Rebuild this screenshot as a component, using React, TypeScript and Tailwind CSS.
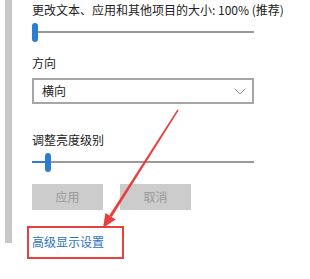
import React from 'react';

const FONT = { fontFamily: '"Microsoft YaHei", "Noto Sans CJK SC", "Noto Sans", sans-serif' };

function Slider({ value }: { value: number }) {
  return (
    <div className="relative h-[19px] w-[222px]">
      <div className="absolute left-0 right-0 top-[8px] h-[2px] bg-[#9a9a9a]" />
      <div className="absolute left-0 top-[8px] h-[2px] bg-[#2b7cd3]" style={{ width: value }} />
      <div className="absolute top-0 h-[19px] w-[6px] rounded-full bg-[#2b7cd3]" style={{ left: value }} />
    </div>
  );
}

export default function App() {
  return (
    <div className="relative flex h-[279px] w-[310px] overflow-hidden bg-white text-[#222]" style={FONT}>
      <div className="ml-[5px] h-[243px] w-[7px] bg-[#c8c8c8]" />
      <div className="ml-[20px] flex w-[222px] flex-col">
        <div className="mt-[2px] h-[16px] whitespace-nowrap text-[12px] leading-[16px]">
          更改文本、应用和其他项目的大小: 100% (推荐)
        </div>
        <div className="mt-[5px]">
          <Slider value={0} />
        </div>
        <div className="mt-[13px] h-[16px] text-[12px] leading-[16px]">方向</div>
        <div className="mt-[7px] flex h-[26px] items-center justify-between border-2 border-[#a6a6a6] pl-[8px] pr-[6px]">
          <span className="text-[12px] leading-[16px]">横向</span>
          <svg width="12" height="7" viewBox="0 0 12 7">
            <polyline points="0.5,0.5 6,6 11.5,0.5" fill="none" stroke="#8a8a8a" strokeWidth="1" />
          </svg>
        </div>
        <div className="mt-[28px] h-[16px] text-[12px] leading-[16px]">调整亮度级别</div>
        <div className="mt-[5px]">
          <Slider value={13} />
        </div>
        <div className="mt-[12px] flex gap-[17px]">
          <button className="h-[26px] w-[71px] bg-[#cccccc] text-[12px] text-[#9a9a9a]">应用</button>
          <button className="h-[26px] w-[71px] bg-[#cccccc] text-[12px] text-[#9a9a9a]">取消</button>
        </div>
        <a className="mt-[24px] h-[16px] text-[12px] leading-[16px] text-[#2a72c4]">高级显示设置</a>
      </div>

      {/* annotation overlay */}
      <div className="absolute left-[27px] top-[226px] h-[33px] w-[97px] border-2 border-[#e8403f]" />
      <svg className="pointer-events-none absolute left-0 top-0" width="310" height="279">
        <polygon points="178.6,110.4 177.4,109.6 109.2,215.4 111.8,217" fill="#e8403f" />
        <polygon points="103,228 115.6,219.4 105.4,213" fill="#e8403f" />
      </svg>
    </div>
  );
}
